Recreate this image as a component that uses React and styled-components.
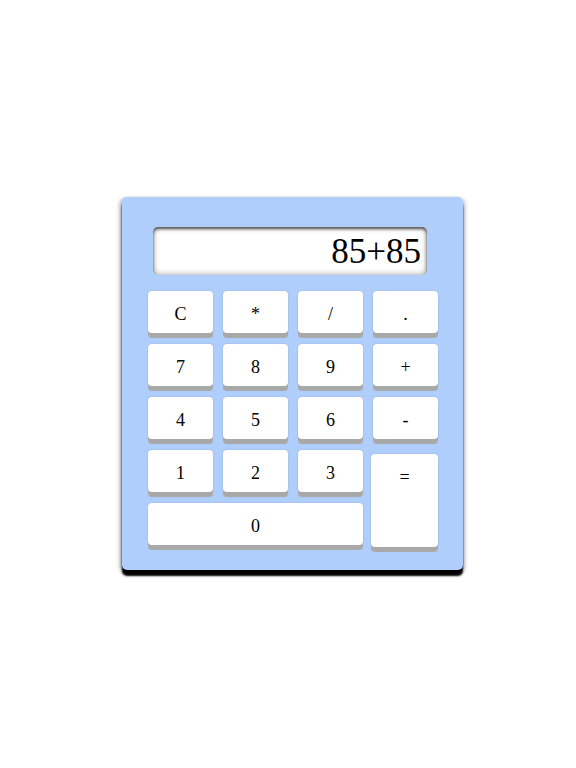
import React, { useState } from 'react'
import styled, { createGlobalStyle } from 'styled-components'

const Global = createGlobalStyle`
  html, body {
    margin: 0;
    padding: 0;
    background: #fff;
  }
`

const Page = styled.div`
  width: 576px;
  height: 768px;
  padding: 197px 0 0 122px;
  box-sizing: border-box;
`

const Body = styled.div`
  width: 341px;
  box-sizing: border-box;
  padding: 30px 25px 25px 26px;
  background: #b0cefc;
  border-radius: 5px;
  box-shadow: 0 6px 2px #000, -2px 2px 4px rgba(0, 0, 0, 0.35), 2px 2px 4px rgba(0, 0, 0, 0.25);
  display: flex;
  flex-direction: column;
  gap: 16px;
`

const Screen = styled.div`
  margin-left: 5px;
  width: 274px;
  height: 48px;
  box-sizing: border-box;
  padding-right: 6px;
  background: #fff;
  border-radius: 5px;
  box-shadow: inset 0 2px 3px #555, inset 0 0 6px #999;
  font-family: "Liberation Serif", "Times New Roman", serif;
  font-size: 35px;
  line-height: 50px;
  text-align: right;
  color: #000;
  overflow: hidden;
`

const Keys = styled.div`
  display: grid;
  grid-template-columns: repeat(4, 65px);
  grid-auto-rows: 42px;
  column-gap: 10px;
  row-gap: 11px;
`

const Key = styled.button`
  border: none;
  padding: 2px 0 0;
  margin: ${p => (p.$tall ? '4px 0 0 -2px' : '0')};
  width: ${p => (p.$tall ? '67px' : 'auto')};
  height: ${p => (p.$tall ? '93px' : '42px')};
  grid-column: ${p => (p.$wide ? 'span 3' : 'auto')};
  grid-row: ${p => (p.$tall ? 'span 2' : 'auto')};
  background: #fff;
  border-radius: 4px;
  box-shadow: 0 5px 1px #a8a8a8, 0 0 2px rgba(0, 0, 0, 0.15);
  font-family: "Liberation Serif", "Times New Roman", serif;
  font-size: 18px;
  line-height: 42px;
  color: #000;
  display: flex;
  justify-content: center;
  align-items: flex-start;
  cursor: pointer;
`

const keys = ['C', '*', '/', '.', '7', '8', '9', '+', '4', '5', '6', '-', '1', '2', '3', '=', '0']

export default function App() {
  const [value, setValue] = useState('85+85')

  const press = k => {
    if (k === 'C') return setValue('')
    if (k === '=') {
      try {
        // eslint-disable-next-line no-new-func
        setValue(String(Function('return (' + value + ')')()))
      } catch (e) {
        setValue('Error')
      }
      return
    }
    setValue(v => v + k)
  }

  return (
    <Page>
      <Global />
      <Body>
        <Screen>{value}</Screen>
        <Keys>
          {keys.map(k => (
            <Key key={k} $tall={k === '='} $wide={k === '0'} onClick={() => press(k)}>
              {k}
            </Key>
          ))}
        </Keys>
      </Body>
    </Page>
  )
}
